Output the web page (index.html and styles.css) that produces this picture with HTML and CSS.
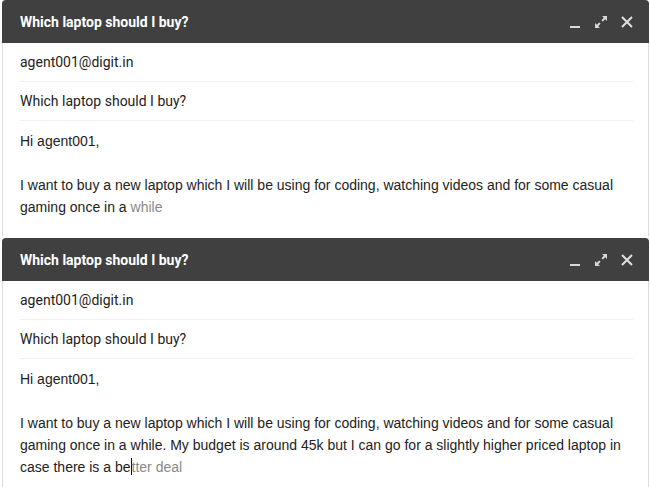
FILE: index.html
```html
<!DOCTYPE html>
<html>
<head>
<meta charset="utf-8">
<link rel="stylesheet" href="styles.css">
</head>
<body>
<div class="stack">
  <section class="compose first">
    <header class="bar">
      <span class="title">Which laptop should I buy?</span>
      <span class="tools">
        <svg class="ic" width="14" height="14" viewBox="0 0 14 14"><rect x="2" y="11" width="10" height="2" fill="#d8d8d8"/></svg>
        <svg class="ic" width="14" height="14" viewBox="0 0 14 14"><path d="M8 1h5v5l-1.8-1.8-2.4 2.4-1.4-1.4 2.4-2.4zM6 13H1V8l1.8 1.8 2.4-2.4 1.4 1.4-2.4 2.4z" fill="#d8d8d8"/></svg>
        <svg class="ic" width="14" height="14" viewBox="0 0 14 14"><path d="M2 2l10 10M12 2L2 12" stroke="#e0e0e0" stroke-width="2"/></svg>
      </span>
    </header>
    <div class="field">agent001@digit.in</div>
    <div class="field">Which laptop should I buy?</div>
    <div class="body">
      <p>Hi agent001,</p>
      <p>I want to buy a new laptop which I will be using for coding, watching videos and for some casual<br>gaming once in a <span class="hint">while</span></p>
    </div>
  </section>
  <section class="compose second">
    <header class="bar">
      <span class="title">Which laptop should I buy?</span>
      <span class="tools">
        <svg class="ic" width="14" height="14" viewBox="0 0 14 14"><rect x="2" y="11" width="10" height="2" fill="#d8d8d8"/></svg>
        <svg class="ic" width="14" height="14" viewBox="0 0 14 14"><path d="M8 1h5v5l-1.8-1.8-2.4 2.4-1.4-1.4 2.4-2.4zM6 13H1V8l1.8 1.8 2.4-2.4 1.4 1.4-2.4 2.4z" fill="#d8d8d8"/></svg>
        <svg class="ic" width="14" height="14" viewBox="0 0 14 14"><path d="M2 2l10 10M12 2L2 12" stroke="#e0e0e0" stroke-width="2"/></svg>
      </span>
    </header>
    <div class="field">agent001@digit.in</div>
    <div class="field">Which laptop should I buy?</div>
    <div class="body">
      <p>Hi agent001,</p>
      <p>I want to buy a new laptop which I will be using for coding, watching videos and for some casual<br>gaming once in a while. My budget is around 45k but I can go for a slightly higher priced laptop in<br>case there is a be<span class="caret"></span><span class="hint">tter deal</span></p>
    </div>
  </section>
</div>
</body>
</html>
```

FILE: styles.css
```css
html, body {
  margin: 0;
  padding: 0;
  background: #fff;
}
.stack {
  display: flex;
  flex-direction: column;
  gap: 2px;
  padding-left: 2px;
  width: 647px;
}
.compose {
  background: #fff;
  border-left: 1px solid #dcdcdc;
  border-right: 1px solid #dcdcdc;
  border-radius: 4px 4px 0 0;
}
.first {
  height: 236px;
  padding-top: 0;
}
.second {
  height: 249px;
}
.bar {
  height: 43px;
  background: #404040;
  border-radius: 4px 4px 0 0;
  margin: 0 -1px;
  display: flex;
  align-items: center;
  justify-content: space-between;
  padding: 0 15px 0 18px;
  box-sizing: border-box;
}
.title {
  font-family: Roboto, "Liberation Sans", sans-serif;
  font-weight: bold;
  font-size: 14px;
  color: #fff;
  padding-top: 1px;
}
.tools {
  display: flex;
  gap: 12px;
  align-items: center;
}
.ic {
  display: block;
}
.field {
  margin: 0 15px 0 17px;
  height: 38px;
  line-height: 38px;
  border-bottom: 1px solid #efefef;
  font-family: Roboto, "Liberation Sans", sans-serif;
  font-size: 14px;
  color: #222;
}
.body {
  padding: 9px 15px 0 17px;
  font-family: "Liberation Sans", Arial, sans-serif;
  font-size: 14px;
  line-height: 22px;
  color: #222;
}
.body p {
  margin: 0 0 22px;
  white-space: nowrap;
}
.hint {
  color: #888;
}
.caret {
  display: inline-block;
  width: 1px;
  height: 17px;
  background: #111;
  vertical-align: -3px;
}
```
